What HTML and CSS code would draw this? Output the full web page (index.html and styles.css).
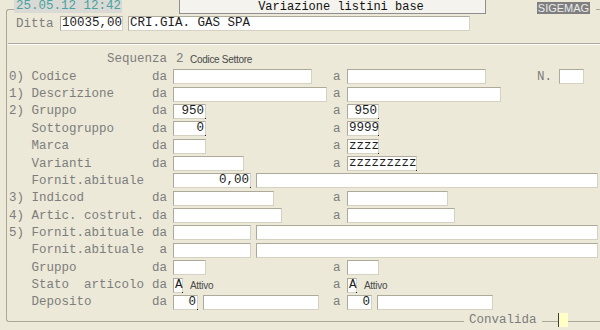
FILE: index.html
```html
<!DOCTYPE html>
<html lang="it">
<head>
    <meta charset="UTF-8">
    <title>Variazione listini base</title>
    <link rel="stylesheet" href="styles.css">
</head>
<body>
    <div class="topbar">
        <div class="clock">25.05.12 12:42</div>
        <div class="title">Variazione listini base</div>
        <div class="tag">SIGEMAG</div>
    </div>

    <div class="frame">
        <div class="ditta">
            <span class="lbl">Ditta</span>
            <span class="f code">10035,00</span>
            <span class="f name">CRI.GIA. GAS SPA</span>
        </div>
        <div class="sep"></div>

        <div class="form">
            <!-- sequenza -->
            <span class="seq">Sequenza</span>
            <span class="cell wide"><span class="seqval">2</span><span class="note">Codice Settore</span></span>

            <span>0)</span><span>Codice</span><span class="da">da</span>
            <span class="cell"><span class="f w139"></span></span>
            <span class="a">a</span>
            <span class="cell"><span class="f w139"></span><span class="nlbl">N.</span><span class="f w25 nbox"></span></span>

            <span>1)</span><span>Descrizione</span><span class="da">da</span>
            <span class="cell"><span class="f w154"></span></span>
            <span class="a">a</span>
            <span class="cell"><span class="f w154"></span></span>

            <span>2)</span><span>Gruppo</span><span class="da">da</span>
            <span class="cell"><span class="f w33 r mk">950</span></span>
            <span class="a">a</span>
            <span class="cell"><span class="f w32 r mk">950</span></span>

            <span></span><span>Sottogruppo</span><span class="da">da</span>
            <span class="cell"><span class="f w33 r mk">0</span></span>
            <span class="a">a</span>
            <span class="cell"><span class="f w32 mk">9999</span></span>

            <span></span><span>Marca</span><span class="da">da</span>
            <span class="cell"><span class="f w33"></span></span>
            <span class="a">a</span>
            <span class="cell"><span class="f w32 mk">zzzz</span></span>

            <span></span><span>Varianti</span><span class="da">da</span>
            <span class="cell"><span class="f w71"></span></span>
            <span class="a">a</span>
            <span class="cell"><span class="f w70 mk">zzzzzzzzz</span></span>

            <span></span><span>Fornit.abituale</span><span class="da"></span>
            <span class="cell wide"><span class="f w78 r mk">0,00</span><span class="f grow"></span></span>

            <span>3)</span><span>Indicod</span><span class="da">da</span>
            <span class="cell"><span class="f w101"></span></span>
            <span class="a">a</span>
            <span class="cell"><span class="f w101"></span></span>

            <span>4)</span><span>Artic. costrut.</span><span class="da">da</span>
            <span class="cell"><span class="f w109"></span></span>
            <span class="a">a</span>
            <span class="cell"><span class="f w108"></span></span>

            <span>5)</span><span>Fornit.abituale</span><span class="da">da</span>
            <span class="cell wide"><span class="f w78"></span><span class="f grow"></span></span>

            <span></span><span>Fornit.abituale</span><span class="da">a</span>
            <span class="cell wide"><span class="f w78"></span><span class="f grow"></span></span>

            <span></span><span>Gruppo</span><span class="da">da</span>
            <span class="cell"><span class="f w33"></span></span>
            <span class="a">a</span>
            <span class="cell"><span class="f w32"></span></span>

            <span></span><span class="pre">Stato  articolo</span><span class="da">da</span>
            <span class="cell"><span class="f w10 mk">A</span><span class="note att">Attivo</span></span>
            <span class="a">a</span>
            <span class="cell"><span class="f w10 mk">A</span><span class="note att">Attivo</span></span>

            <span></span><span>Deposito</span><span class="da">da</span>
            <span class="cell"><span class="f w25 r mk">0</span><span class="f w116"></span></span>
            <span class="a">a</span>
            <span class="cell"><span class="f w25 r">0</span><span class="f w116"></span></span>
        </div>
    </div>

    <div class="foot">
        <span class="lbl">Convalida</span>
        <span class="ok"></span>
    </div>
</body>
</html>
```

FILE: styles.css
```css
* {
    box-sizing: border-box;
}

body {
    margin: 0;
    width: 600px;
    height: 330px;
    overflow: hidden;
    background: #ece9d8;
    font-family: "Liberation Mono", "Courier New", monospace;
    font-size: 12.5px;
    color: #7d7d7d;
}

/* top strip */
.topbar {
    position: relative;
    z-index: 1;
    display: flex;
    align-items: flex-start;
    height: 15px;
    margin: 0 4px 0 14px;
    background: #ece9d8;
}

.clock {
    width: 108px;
    height: 13px;
    padding-left: 2px;
    background: #d9d9d5;
    color: #4aa3a0;
    line-height: 13px;
}

.title {
    width: 307px;
    height: 14px;
    margin-left: 57px;
    padding-left: 17px;
    border: 1px solid #8e8e8e;
    border-top: none;
    background: #f4f3ee;
    color: #111;
    font-size: 12px;
    line-height: 14px;
    text-align: center;
}

.tag {
    width: 53px;
    height: 12px;
    margin: 2px 0 0 51px;
    background: #7f7f7f;
    color: #ececec;
    font-family: "Liberation Sans", Arial, sans-serif;
    font-size: 11px;
    line-height: 12px;
    text-align: center;
}

/* group frame */
.frame {
    margin: -6px 0 0 6px;
    padding-bottom: 10px;
    border: 1px solid #aca899;
    border-right: none;
    border-radius: 3px 0 0 3px;
}

.ditta {
    display: flex;
    align-items: center;
    height: 15px;
    margin: 6px 0 0 9px;
}

.ditta .lbl {
    width: 44px;
}

.ditta .code {
    width: 63px;
}

.ditta .name {
    width: 342px;
    margin-left: 5px;
}

.sep {
    margin: 12px 0 0 1px;
    border-top: 1px solid #aca899;
    border-bottom: 1px solid #fff;
}

/* fields */
.f {
    position: relative;
    display: block;
    flex: none;
    height: 15px;
    padding: 0 1px;
    border: 1px solid #d6d2c3;
    border-top-color: #aeaa9b;
    border-left-color: #aeaa9b;
    background: #fff;
    color: #1c1c1c;
    line-height: 13px;
    white-space: pre;
}

.f.r {
    text-align: right;
}

.f.mk::after {
    content: "";
    position: absolute;
    right: -1px;
    bottom: -1px;
    width: 1px;
    height: 1px;
    background: #222;
}

.w10 { width: 10px; }
.w25 { width: 25px; }
.w32 { width: 32px; }
.w33 { width: 33px; }
.w70 { width: 70px; }
.w71 { width: 71px; }
.w78 { width: 78px; }
.w101 { width: 101px; }
.w108 { width: 108px; }
.w109 { width: 109px; }
.w116 { width: 116px; }
.w139 { width: 139px; }
.w154 { width: 154px; }

.grow {
    flex: 1;
}

/* selection grid */
.form {
    display: grid;
    grid-template-columns: 22.5px 118.5px 23px 160px 14px 1fr;
    grid-auto-rows: 17.36px;
    align-items: center;
    margin: 5.7px 2px 0 2px;
    white-space: nowrap;
}

.pre {
    white-space: pre;
}

.da {
    padding-right: 6px;
    text-align: right;
}

.cell {
    display: flex;
    align-items: center;
    gap: 5px;
}

.cell.wide {
    grid-column: 4 / -1;
}

.seq {
    grid-column: 1 / 4;
    padding-right: 6px;
    text-align: right;
}

.seqval {
    padding-left: 3px;
}

.note {
    margin-left: 1.5px;
    font-family: "Liberation Sans", Arial, sans-serif;
    font-size: 10px;
    letter-spacing: -0.3px;
    color: #4a4a4a;
}

.note.att {
    margin-left: 2px;
}

.nlbl {
    margin-left: 46px;
}

.nbox {
    margin-left: 2px;
}

/* bottom line */
.foot {
    position: relative;
    display: flex;
    justify-content: flex-end;
    align-items: flex-start;
    height: 14px;
    margin-top: -9px;
    padding-right: 32px;
}

.foot .lbl {
    padding: 0 5px;
    background: #ece9d8;
    line-height: 14px;
}

.foot .ok {
    width: 10px;
    height: 14px;
    margin-left: 16.5px;
    border-left: 1px solid #3c3c3c;
    background: #ffffc6;
}
```
